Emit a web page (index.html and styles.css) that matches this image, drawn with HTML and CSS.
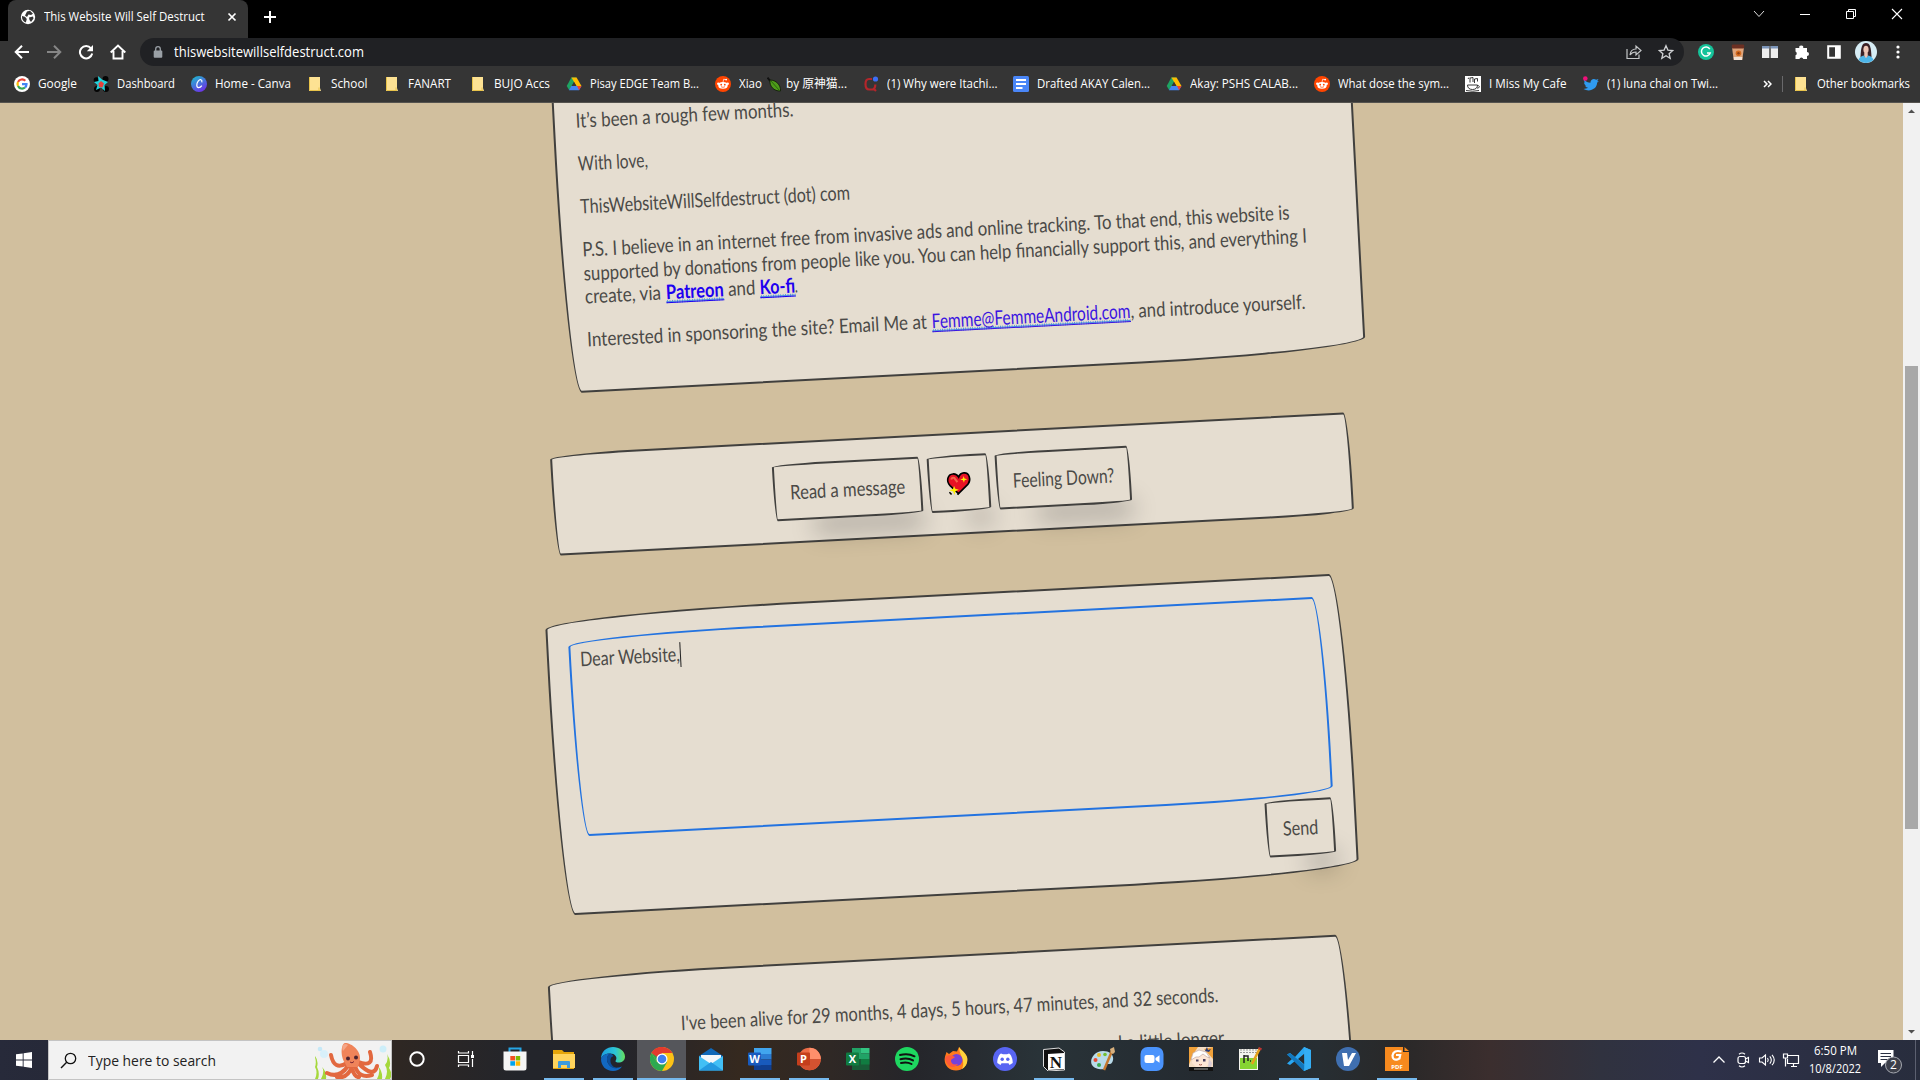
FILE: index.html
```html
<!DOCTYPE html>
<html lang="en">
<head>
<meta charset="utf-8">
<title>This Website Will Self Destruct</title>
<link rel="stylesheet" href="styles.css">
</head>
<body>
<svg class="defs" width="0" height="0" aria-hidden="true">
  <symbol id="folder" viewBox="0 0 16 16"><path d="M2 1h11v11l1 3H2z" fill="#fde293"/><path d="M2.500 1v13.500H13M12 11.500v3" fill="none" stroke="#e8c34a"/></symbol>
  <symbol id="drive" viewBox="0 0 16 16"><path d="M5.400 1.500h5L8 6 3.300 14.300.700 10z" fill="#1ea362"/><path d="M5.400 1.500h5.200L15.500 10h-5z" fill="#fbbc04"/><path d="M5.300 10h10.200L13 14.300H2.900z" fill="#4285f4"/><path d="M12.500 10h3L13 14.300l-2-4.300z" fill="#ea4335"/><path d="M8 6.100l2.300 3.900H5.700z" fill="#353535"/></symbol>
  <symbol id="reddit" viewBox="0 0 16 16"><circle cx="8" cy="8" r="8" fill="#ff4500"/><ellipse cx="8" cy="9.400" rx="4.700" ry="3.300" fill="#fff"/><circle cx="3.300" cy="7.800" r="1.200" fill="#fff"/><circle cx="12.700" cy="7.800" r="1.200" fill="#fff"/><circle cx="6.200" cy="8.700" r=".9" fill="#ff4500"/><circle cx="9.800" cy="8.700" r=".9" fill="#ff4500"/><path d="M6 10.700q2 1.300 4 0" stroke="#ff4500" stroke-width=".7" fill="none"/><path d="M8 6.200l.7-3 2.300.5" stroke="#fff" stroke-width=".7" fill="none"/><circle cx="11.200" cy="3.600" r=".9" fill="#fff"/></symbol>
</svg>

<header class="chrome">
  <div class="tabstrip">
    <div class="tab">
      <svg width="16" height="16" viewBox="0 0 16 16"><circle cx="8" cy="8" r="7.200" fill="#fff"/><path d="M2 7l3 .8L6.800 10l-1 3.500C3 12.500 1.800 10 2 7zM7 2.500l3-.7 3 3L11 6 8.500 5.500 7 8 5 6.500zM9 8.500l4-1 .5 2L11 13l-1.500-2z" fill="#353535"/></svg>
      <span class="tab-title" data-w="160.5">This Website Will Self Destruct</span>
      <svg class="tab-close" width="10" height="10" viewBox="0 0 10 10"><path d="M1.500 1.500l7 7M8.500 1.500l-7 7" stroke="#fff" stroke-width="1.700"/></svg>
    </div>
    <svg class="plus" width="14" height="14" viewBox="0 0 14 14"><path d="M7 1v12M1 7h12" stroke="#fff" stroke-width="2"/></svg>
    <div class="winbtns">
      <svg width="46" height="28" viewBox="0 0 46 28"><path d="M18 11l5 5.500 5-5.500" fill="none" stroke="#ddd"/></svg>
      <svg width="46" height="28" viewBox="0 0 46 28"><path d="M18 14.500h10" stroke="#fff"/></svg>
      <svg width="46" height="28" viewBox="0 0 46 28"><path d="M18.500 11.500h7v7h-7zM20.500 11V9.500h7v7H26" fill="none" stroke="#fff"/></svg>
      <svg width="46" height="28" viewBox="0 0 46 28"><path d="M18 9l10 10M28 9L18 19" stroke="#fff" stroke-width="1.100"/></svg>
    </div>
  </div>

  <div class="toolbar">
    <svg width="16" height="16" viewBox="0 0 16 16"><path d="M15 8H2M8 1.700L1.700 8 8 14.300" fill="none" stroke="#fff" stroke-width="2"/></svg>
    <svg width="16" height="16" viewBox="0 0 16 16"><path d="M1 8h13M8 1.700L14.300 8 8 14.300" fill="none" stroke="#868686" stroke-width="2"/></svg>
    <svg width="16" height="16" viewBox="0 0 16 16"><path d="M13 4.300A6.200 6.200 0 1 0 14.200 9.500" fill="none" stroke="#fff" stroke-width="2"/><path d="M15 1v6.300H8.800z" fill="#fff"/></svg>
    <svg width="16" height="16" viewBox="0 0 16 16"><path d="M.7 8.500L8 1.500l7.300 7M3.500 7v7.500h9V7" fill="none" stroke="#fff" stroke-width="1.900"/></svg>
    <div class="omnibox">
      <svg width="10" height="12" viewBox="0 0 10 12"><rect x=".7" y="4.500" width="8.600" height="7.300" rx="1" fill="#9aa0a6"/><path d="M2.700 5V3a2.300 2.300 0 0 1 4.600 0v2" fill="none" stroke="#9aa0a6" stroke-width="1.300"/></svg>
      <span class="url" data-w="190">thiswebsitewillselfdestruct.com</span>
      <svg class="share" width="16" height="16" viewBox="0 0 16 16"><path d="M1 5v9.500h12V10.500M4 11c.4-4 2.500-6 6-6V2l5 4.500-5 4.500V8C7.500 8 5.500 8.800 4 11z" fill="none" stroke="#c4c6c8" stroke-width="1.200"/></svg>
      <svg width="16" height="16" viewBox="0 0 16 16"><path d="M8 1.700l1.900 4.400 4.800.4-3.600 3.200 1.100 4.600L8 11.800l-4.200 2.500 1.100-4.600L1.300 6.500l4.800-.4z" fill="none" stroke="#d0d2d4" stroke-width="1.300"/></svg>
    </div>
    <svg width="16" height="16" viewBox="0 0 16 16"><circle cx="8" cy="8" r="8" fill="#15c39a"/><path d="M11.800 5.200A4.500 4.500 0 1 0 12.200 9H9" fill="none" stroke="#fff" stroke-width="1.500"/></svg>
    <svg width="16" height="16" viewBox="0 0 16 16"><path d="M2 3h12l-1.700 13H3.700z" fill="#dfa47a"/><path d="M3.700 13h8.600l-.3 3H4z" fill="#f1e3d6"/><rect x="1.800" y=".5" width="12.400" height="4" rx="1" fill="#6b2f22"/><circle cx="8.500" cy="9.300" r="2.800" fill="#d46a1c"/><circle cx="8.500" cy="9.300" r="1.200" fill="#8d3d12"/></svg>
    <svg width="16" height="16" viewBox="0 0 16 16"><path d="M0 2h7.300v12H0zM8.700 2H16v12H8.700z" fill="#eee"/><path d="M0 2h7.300v2.500H0zM8.700 2H16v2.500H8.700z" fill="#7b94b8"/></svg>
    <svg width="16" height="16" viewBox="0 0 16 16"><path d="M1.500 4h3.800a2 2 0 1 1 3.900 0H13v4a2 2 0 1 1 0 4v3H9.300a2 2 0 0 0-3.900 0H1.500v-3.700a2 2 0 0 0 0-3.700z" fill="#fff"/></svg>
    <svg width="16" height="16" viewBox="0 0 16 16"><path d="M2.200 2.200h11.600v11.600H2.200z" fill="none" stroke="#fff" stroke-width="2"/><path d="M9 2h5v12H9z" fill="#fff"/></svg>
    <svg class="avatar" width="22" height="22" viewBox="0 0 22 22"><circle cx="11" cy="11" r="11" fill="#d7edf5"/><path d="M5.500 16C6 6 7 2 11 2s5 4 5.500 14z" fill="#3a2025"/><ellipse cx="11" cy="8.500" rx="2.600" ry="3.800" fill="#edc5b5"/><path d="M3.500 19c1-3 3.500-4 5-4.500l2.500 2 2.500-2c1.500.5 4 1.500 5 4.500a11 11 0 0 1-15 0z" fill="#4db5e8"/><path d="M9.300 11.500h3.400L12.800 15 11 17l-1.800-2z" fill="#edc5b5"/></svg>
    <svg width="16" height="16" viewBox="0 0 16 16"><circle cx="8" cy="3" r="1.600" fill="#fff"/><circle cx="8" cy="8" r="1.600" fill="#fff"/><circle cx="8" cy="13" r="1.600" fill="#fff"/></svg>
  </div>

  <nav class="bookmarks">
    <a class="bm"><svg width="16" height="16" viewBox="0 0 16 16"><circle cx="8" cy="8" r="8" fill="#fff"/><g fill="none" stroke-width="2.200"><path d="M11.300 4.800A4.500 4.500 0 0 0 4 6" stroke="#ea4335"/><path d="M4 6a4.600 4.600 0 0 0 0 4" stroke="#fbbc04"/><path d="M4 10a4.500 4.500 0 0 0 7 1.500" stroke="#34a853"/><path d="M8 8.200h4.500a4.500 4.500 0 0 1-1.500 3.300" stroke="#4285f4"/></g></svg><span data-w="39">Google</span></a>
    <a class="bm"><svg width="16" height="16" viewBox="0 0 16 16"><g fill="#050505"><circle cx="3.500" cy="4" r="2.800"/><circle cx="12.500" cy="3" r="3"/><circle cx="13" cy="13" r="3"/><circle cx="4" cy="13" r="3"/></g><path d="M5 0l4 3.500L15 6l-3.500 3 .5 6-4-3.500-5 2.500 1.500-5L1 6l4.500-1z" fill="#22d3dd"/><path d="M8 5l3 2.500-1.500 4-3.500-.5-.5-3.500z" fill="#e8413c"/></svg><span data-w="58">Dashboard</span></a>
    <a class="bm"><svg width="16" height="16" viewBox="0 0 16 16"><defs><linearGradient id="cv" x1="0" y1="0" x2=".6" y2="1"><stop offset="0" stop-color="#18c3cc"/><stop offset="1" stop-color="#6c35e8"/></linearGradient></defs><circle cx="8" cy="8" r="8" fill="url(#cv)"/><path d="M10.800 6.300c.7-3-1.800-3.500-3.600-1.200-1.900 2.500-2 6.500.4 6.600 1.300 0 2.500-1 3.200-2.100" fill="none" stroke="#fff" stroke-width="1.200"/></svg><span data-w="76">Home - Canva</span></a>
    <a class="bm"><svg width="16" height="16"><use href="#folder"/></svg><span data-w="36.5">School</span></a>
    <a class="bm"><svg width="16" height="16"><use href="#folder"/></svg><span class="wide" data-w="43">FANART</span></a>
    <a class="bm"><svg width="16" height="16"><use href="#folder"/></svg><span data-w="56">BUJO Accs</span></a>
    <a class="bm"><svg width="16" height="16"><use href="#drive"/></svg><span data-w="109">Pisay EDGE Team B...</span></a>
    <a class="bm"><svg width="16" height="16"><use href="#reddit"/></svg><span data-w="23">Xiao</span><svg class="leaf" width="14" height="16" viewBox="0 0 14 16"><path d="M.5 1.500L4 6" stroke="#111" stroke-width="2"/><path d="M3 4c6 0 11 5 10.500 11C7 15.500 2 10 3 4z" fill="#4e9c1a" stroke="#16240c"/><path d="M4 5l8 9" stroke="#2c6410"/></svg><span data-w="61">by 原神猫...</span></a>
    <a class="bm"><svg width="16" height="16" viewBox="0 0 16 16"><path d="M9 3H6C3.500 3 2.500 4.500 2.500 8s1 5.500 3.500 5.500h3c2.500 0 3.300-1.500 3.300-5M10 12l3 3" fill="none" stroke="#b3262b" stroke-width="2.200"/><circle cx="12.500" cy="3" r="2.600" fill="#3d6ef5"/></svg><span data-w="110.5">(1) Why were Itachi...</span></a>
    <a class="bm"><svg width="16" height="16" viewBox="0 0 16 16"><rect width="16" height="16" rx="1.500" fill="#4a86f7"/><path d="M3 4h10M3 8h10M3 12h6.500" stroke="#fff" stroke-width="1.900"/></svg><span data-w="113">Drafted AKAY Calen...</span></a>
    <a class="bm"><svg width="16" height="16"><use href="#drive"/></svg><span data-w="108">Akay: PSHS CALAB...</span></a>
    <a class="bm"><svg width="16" height="16"><use href="#reddit"/></svg><span data-w="111">What dose the sym...</span></a>
    <a class="bm"><svg width="16" height="16" viewBox="0 0 16 16"><path d="M0 0h16v16H0z" fill="#fff"/><path d="M2.500 9h10c0 3-2 4.500-5 4.500s-5-1.500-5-4.500zM12.500 9.500c3 0 2 3-.5 2.500M1 14.500q7 1.500 13 0M5 6.500V2l3-.5V6M9.500 7V3l3-.5v3M3 3l1-1.500" fill="none" stroke="#222" stroke-width=".9"/></svg><span data-w="77.5">I Miss My Cafe</span></a>
    <a class="bm"><svg width="16" height="16" viewBox="0 0 16 16"><path d="M1 3.500c2 2.300 4 3.200 6.500 3.300-.5-3.500 3.500-5 5.600-3L15.500 3l-1.300 2.300 1.600-.3-1.700 1.700C14.200 13 6.500 16.500.5 13c1.800 0 3.300-.4 4.500-1.400-1.500-.2-2.500-1-3-2.200h1.300C1.800 8.900 1 7.700 1 6.200l1.200.3C.9 5.500.6 4.500 1 3.500z" fill="#2f9bf0"/><circle cx="2.300" cy="2.500" r="2.300" fill="#f0107a"/></svg><span data-w="111">(1) luna chai on Twi...</span></a>
    <div class="bm-end">
      <svg width="9" height="8" viewBox="0 0 9 8"><path d="M1 1l3 3-3 3M5 1l3 3-3 3" fill="none" stroke="#fff" stroke-width="1.500"/></svg>
      <i class="bm-rule"></i>
      <a class="bm"><svg width="16" height="16"><use href="#folder"/></svg><span data-w="93">Other bookmarks</span></a>
    </div>
  </nav>
</header>

<div class="viewport">
  <main class="page">
    <section class="card letter">
      <p><span data-w="218">It’s been a rough few months.</span></p>
      <p><span data-w="70">With love,</span></p>
      <p><span data-w="270">ThisWebsiteWillSelfdestruct (dot) com</span></p>
      <p><span data-w="708">P.S. I believe in an internet free from invasive ads and online tracking. To that end, this website is</span><br><span data-w="724">supported by donations from people like you. You can help financially support this, and everything I</span><br><span data-w="80.500">create, via&nbsp;</span><a class="strong" data-w="58">Patreon</a><span data-w="36">&nbsp;and&nbsp;</span><a class="strong" data-w="35.500">Ko-fi</a><span data-w="3">.</span></p>
      <p><span data-w="344.500">Interested in sponsoring the site? Email Me at&nbsp;</span><a data-w="199">Femme@FemmeAndroid.com</a><span data-w="175">, and introduce yourself.</span></p>
    </section>

    <section class="card actions">
      <button class="btn"><span data-w="115">Read a message</span></button>
      <button class="btn"><svg width="28" height="24" viewBox="0 0 28 24"><path d="M13 22L5 13.500C1 9 3 2 8.500 2c2.500 0 4.500 1.500 5.500 3.500C15 3 17 1.500 19.500 1.500c5.500 0 7 7 3.500 11.500z" fill="#e81224" stroke="#000" stroke-width="1.600"/><path d="M6.500 7.500q1-2.500 3-1.500l3 4.500" fill="none" stroke="#f4664a" stroke-width="2"/><path d="M19 4.500l.8 2.700 2.700.8-2.700.8-.8 2.700-.8-2.700-2.700-.8 2.700-.8zM9 14l1 3 3.500 1.200L10 19.500 9 23l-1.300-3.500L4 18.200 7.700 17z" fill="#fff100"/><path d="M4 20l2 2.500M12 23l1.500-2" stroke="#000" stroke-width="1.500"/></svg></button>
      <button class="btn"><span data-w="101.500">Feeling Down?</span></button>
    </section>

    <section class="card compose">
      <div class="field"><span data-w="100">Dear Website,</span><i class="caret"></i></div>
      <button class="btn"><span data-w="35.500">Send</span></button>
    </section>

    <section class="card status">
      <p><span data-w="538">I've been alive for 29 months, 4 days, 5 hours, 47 minutes, and 32 seconds.</span></p>
      <p><span data-w="552">Every letter that you send to me will help me to stay around a little longer.</span></p>
    </section>
  </main>
  <aside class="scrollbar">
    <svg width="17" height="17" viewBox="0 0 17 17"><path d="M5 10l3.500-3.500L12 10z" fill="#505050"/></svg>
    <div class="thumb"></div>
    <svg class="down" width="17" height="17" viewBox="0 0 17 17"><path d="M5 7l3.500 3.500L12 7z" fill="#505050"/></svg>
  </aside>
</div>

<footer class="taskbar">
  <div class="start"><svg width="16" height="16" viewBox="0 0 16 16"><path d="M0 2.300L6.700 1.400V7.600H0zM7.600 1.300L16 0v7.600H7.600zM0 8.400h6.700v6.200L0 13.700zM7.600 8.400H16V16l-8.400-1.300z" fill="#fff"/></svg></div>
  <div class="search">
    <svg width="17" height="17" viewBox="0 0 17 17"><circle cx="10.500" cy="6.500" r="5.200" fill="none" stroke="#111" stroke-width="1.300"/><path d="M6.700 10.200L1 16" stroke="#111" stroke-width="1.400"/></svg>
    <span data-w="128">Type here to search</span>
    <svg class="octopus" width="76" height="38" viewBox="0 0 76 38"><path d="M0 38q3-7 0-12 2-6-1-12 5 5 3 12 3 6 1 12zM6 38q4-8 1-12 5 5 4 12zM62 38q4-8 1-13 5 6 4 13zM70 38q4-8 0-14 4-5 2-11 5 8 2 14 4 6 1 11z" fill="#a5d83c"/><circle cx="9" cy="13" r="4" fill="#d8f0fa"/><circle cx="5" cy="8" r="2.300" fill="#c6e9f8"/><circle cx="68" cy="8" r="3.500" fill="#cdeef9"/><g fill="none" stroke="#e2683f" stroke-width="4" stroke-linecap="round"><path d="M32 22Q19 30 16 14M33 25Q24 38 12 32M37 26Q32 38 22 36M40 25Q44 38 57 34M43 22Q59 38 62 25M43 21Q60 27 55 11M36 26Q40 37 44 36"/></g><path d="M30 22C25 15 26 3 30 2c7 0 16 8 15 16l-2 8H32z" fill="#f0845a"/><path d="M28 10C26 5 29 1 33 4z" fill="#f5a688"/><circle cx="33" cy="17.500" r="2" fill="#4b2330"/><circle cx="41" cy="16.500" r="2" fill="#4b2330"/><path d="M35 21q2 2 4-.5" stroke="#7b2734" fill="none"/></svg>
  </div>
  <div class="apps">
    <div class="app"><svg width="24" height="24" viewBox="0 0 24 24"><circle cx="12" cy="12" r="6.700" fill="none" stroke="#fff" stroke-width="2"/></svg></div>
    <div class="app"><svg width="24" height="24" viewBox="0 0 24 24"><path d="M4.500 8.500h10v7h-10zM4.500 4v2h10V4M4.500 20v-2h10v2M18.500 4v4M18.500 12v8" fill="none" stroke="#fff" stroke-width="1.200"/><path d="M17 8h3v3h-3z" fill="#fff"/></svg></div>
    <div class="app"><svg width="24" height="24" viewBox="0 0 24 24"><path d="M6.500 5V1.500h11V5" fill="none" stroke="#26a5e4" stroke-width="2"/><path d="M.5 4.500h23V21a2.500 2.500 0 0 1-2.500 2.500H3A2.500 2.500 0 0 1 .5 21z" fill="#f5f5f5"/><path d="M7.300 9H12v4.500H7.300z" fill="#f25022"/><path d="M12.700 9h4.500v4.500h-4.500z" fill="#7fba00"/><path d="M7.300 14.200H12v4.500H7.300z" fill="#00a4ef"/><path d="M12.700 14.200h4.500v4.500h-4.500z" fill="#ffb900"/></svg></div>
    <div class="app on"><svg width="24" height="24" viewBox="0 0 24 24"><path d="M1 3h9l2 2h10v17H1z" fill="#e5a50a"/><path d="M1 7h22v14H1z" fill="#ffd45c"/><path d="M6 21v-6a1 1 0 0 1 1-1h10a1 1 0 0 1 1 1v6h-3v-3H9v3z" fill="#3c9bdc"/></svg></div>
    <div class="app on"><svg width="24" height="24" viewBox="0 0 24 24"><defs><linearGradient id="ed"><stop offset="0" stop-color="#1b9de2"/><stop offset=".6" stop-color="#2cc6d6"/><stop offset="1" stop-color="#66e05c"/></linearGradient></defs><path d="M0 12C0 4 6 0 12 0s12 4 12 9.500c0 4-3 6-6.500 6-3 0-3.500-1-2.500-2.500 1.500-3-1-6.500-6-6.500C5 6.500 1.500 8 0 12z" fill="url(#ed)"/><path d="M0 12c1.500-4 5-5.500 9-5.500C6 8.500 5 13 7.500 17s8 5 13.500 2.500C18.500 23 15.500 24 12 24 5 24 0 19 0 12z" fill="#1268c0"/><path d="M9 6.600C5.500 9 5 13 7.500 17c2 3.500 6 5 9 4.500C11 20 9 16 9.500 12.500c.3-2.500 2-3 3-3.500C11.500 7.500 10 7 9 6.600z" fill="#0b4f9c"/></svg></div>
    <div class="app on active"><svg width="24" height="24" viewBox="0 0 24 24"><circle cx="12" cy="12" r="12" fill="#fbc116"/><path d="M1.600 6A12 12 0 0 1 22.400 6H12z" fill="#e33b2e"/><path d="M1.600 6A12 12 0 0 0 12 24l5.200-9L12 12 6.800 15z" fill="#2da94f"/><path d="M1.600 6A12 12 0 0 1 12 0v6.500L7 12z" fill="#e33b2e"/><path d="M1.600 6l5.200 9L7 10z" fill="#2da94f"/><circle cx="12" cy="12" r="5.500" fill="#fff"/><circle cx="12" cy="12" r="4.300" fill="#3f7ef0"/></svg></div>
    <div class="app"><svg width="24" height="24" viewBox="0 0 24 24"><path d="M0 9l12-8 12 8v6H0z" fill="#1068b8"/><path d="M2 8h20v9H2z" fill="#f4f7fa"/><path d="M0 9l12 8 12-8v14.500H0z" fill="#42bff5"/><path d="M0 23.500L12 15l12 8.500z" fill="#2499e0"/></svg></div>
    <div class="app on"><svg width="24" height="24" viewBox="0 0 24 24"><path d="M6 1h17.500v6H6z" fill="#41a5ee"/><path d="M6 7h17.500v5.500H6z" fill="#2b7cd3"/><path d="M6 12.500h17.500V18H6z" fill="#185abd"/><path d="M6 18h17.500v5H6z" fill="#103f91"/><rect y="5.500" width="13" height="13" rx="1" fill="#185abd"/><text x="6.500" y="16" text-anchor="middle" class="ms">W</text></svg></div>
    <div class="app on"><svg width="24" height="24" viewBox="0 0 24 24"><circle cx="12.500" cy="12" r="11.300" fill="#ed6c47"/><path d="M12.500.7A11.300 11.300 0 0 1 23.800 12H12.500z" fill="#ff8f6b"/><path d="M1.200 12h22.600a11.300 11.300 0 0 1-22.600 0z" fill="#d35230"/><rect y="5.500" width="13" height="13" rx="1" fill="#c43e1c"/><text x="6.500" y="16" text-anchor="middle" class="ms">P</text></svg></div>
    <div class="app"><svg width="24" height="24" viewBox="0 0 24 24"><path d="M6 1h9v11H6z" fill="#21a366"/><path d="M15 1h8.500v5.500H15z" fill="#33c481"/><path d="M6 12h9v6H6z" fill="#107c41"/><path d="M15 6.500h8.500V12H15z" fill="#21a366"/><path d="M6 12h17.500v11H6z" fill="#185c37"/><path d="M15 12h8.500v5.500H15z" fill="#107c41"/><rect y="5.500" width="13" height="13" rx="1" fill="#107c41"/><text x="6.500" y="16" text-anchor="middle" class="ms">X</text></svg></div>
    <div class="app"><svg width="24" height="24" viewBox="0 0 24 24"><circle cx="12" cy="12" r="12" fill="#1ed760"/><path d="M5 8q8-2.200 14.500 1.300M5.500 12.200q7-2 12.500 1.200M6 16q6-1.500 10.500 1" fill="none" stroke="#111" stroke-width="2" stroke-linecap="round"/></svg></div>
    <div class="app"><svg width="24" height="24" viewBox="0 0 24 24"><path d="M2.500 5L5 7l4-3 4 .5L15 0c2 3 6 5 8 10 1.500 8-4 13.500-11 13.500S0 18 .7 11.500C1 8.500 2 7 2.500 5z" fill="#ff7a1c"/><path d="M15 0c2 3 6 5 8 10 1.500 6-2 11-5 12C22 13 15 8 15 0z" fill="#ffd23c"/><circle cx="12.500" cy="13" r="6" fill="#7542d9"/><path d="M1 11c2-4 6-3 10-1-1 2-4 1-4 4s3 4 7 3c-4 5-11 4-13-6z" fill="#ff5a3a"/></svg></div>
    <div class="app"><svg width="24" height="24" viewBox="0 0 24 24"><circle cx="12" cy="12" r="12" fill="#5865f2"/><path d="M8 6.500l2 .7h4l2-.7c2 .5 4 6 3.700 9.500L16.500 18l-1-1.700h-7l-1 1.700-3.200-2C4 12.500 6 7 8 6.500z" fill="#fff"/><circle cx="9.200" cy="12.300" r="1.700" fill="#5865f2"/><circle cx="14.800" cy="12.300" r="1.700" fill="#5865f2"/></svg></div>
    <div class="app on"><svg width="24" height="24" viewBox="0 0 24 24"><path d="M1.500 2.500L17 1l5.500 4v18L6 24l-4.500-4.500z" fill="#111" stroke="#ddd"/><path d="M6 7l16-1v16L6 23z" fill="#fff"/><text x="14" y="20.500" text-anchor="middle" class="notion">N</text></svg></div>
    <div class="app"><svg width="24" height="24" viewBox="0 0 24 24"><path d="M12 4c7 0 11 4 10 9s-4 4-6 4-2 2-2 4-10 2-13-3S3 4 12 4z" fill="#b9dbea"/><circle cx="8" cy="8" r="2" fill="#e9bb2c"/><circle cx="4.500" cy="13" r="2" fill="#e84a33"/><circle cx="8" cy="18" r="2" fill="#3bab4e"/><circle cx="14" cy="7.500" r="1.800" fill="#72bf32"/><path d="M13 23L21 4" stroke="#c4772e" stroke-width="2.500"/><path d="M20 6l-1-4 4-2 1 5-2 2z" fill="#d8b07d"/></svg></div>
    <div class="app"><svg width="24" height="24" viewBox="0 0 24 24"><rect x=".5" width="23" height="24" rx="7" fill="#4a93fc"/><rect x="4.500" y="8" width="10" height="8" rx="2" fill="#fff"/><path d="M15.500 11l4-2.700v7.500l-4-2.800z" fill="#fff"/></svg></div>
    <div class="app"><svg width="24" height="24" viewBox="0 0 24 24"><path d="M0 0h24v24H0z" fill="#f3dcc4"/><path d="M0 0h9L3 9l-3 9zM15 2l9-2v12z" fill="#f0a13a"/><path d="M4 9q7-7 15 1l1 7-5 4H8l-5-5z" fill="#fde6d6"/><path d="M2 13L4 6l6-3 7 2 4 6-3-1-4-3-4 3-3 0z" fill="#fff" stroke="#c2a7a2" stroke-width=".7"/><path d="M16 4l2-4 1 3 3-1-2 3z" fill="#273a78"/><path d="M7 12.500h2.500v2H7zM14 12h2.500v2.500H14z" fill="#4a4060"/><path d="M10 17.500q1.500 1 3 0" stroke="#a85a50" fill="none"/><path d="M20 12l3 4-1 4h-3z" fill="#d7c9d4"/><path d="M0 20h24v4H0z" fill="#111"/><path d="M5 22h14" stroke="#ccc" stroke-width=".8"/></svg></div>
    <div class="app"><svg width="24" height="24" viewBox="0 0 24 24"><path d="M1 2h19v21H1z" fill="#f4f4ee"/><path d="M2 11h17v11H2z" fill="#86d432"/><path d="M2 3h17M2 5.500h17" stroke="#999" stroke-dasharray="2 1"/><path d="M6 8v8M6 9h4v5M12 14h1M15 14h1" stroke="#222" stroke-width="1.500" fill="none"/><path d="M14 17L22 1" stroke="#e5a21c" stroke-width="2.600"/><path d="M21 0l3 1.500-1 2-3-1.500z" fill="#b33"/></svg></div>
    <div class="app on"><svg width="24" height="24" viewBox="0 0 24 24"><path d="M17 0l7 3v18l-7 3L8 14l-5 4-3-1.500 5-4.500-5-4.500L3 6l5 4zM17.500 6.500L11 12l6.500 5.500z" fill="#2aa7f2" fill-rule="evenodd"/><path d="M0 7.500L3 6l14.500 12-.5 6z" fill="#1277bd"/><path d="M17 0l7 3v18l-7 3 .5-2z" fill="#34aef5"/></svg></div>
    <div class="app"><svg width="24" height="24" viewBox="0 0 24 24"><circle cx="12" cy="12" r="12" fill="#3f6fb0"/><path d="M6 6h5l1 7 4-7h4l-7 13H8z" fill="#fff"/></svg></div>
    <div class="app on"><svg width="24" height="24" viewBox="0 0 24 24"><path d="M0 0h18v5h6v19H0z" fill="#f78a1e"/><path d="M19.500 0l4.500 4h-4.500z" fill="#f78a1e"/><path d="M16.500 4.500q-8-2-9 4 0 5 5 4l2-1 .7-3.500H11" fill="none" stroke="#fff" stroke-width="2.200"/><text x="12" y="22" text-anchor="middle" class="pdf">PDF</text></svg></div>
  </div>
  <div class="tray">
    <svg width="24" height="20" viewBox="0 0 24 20"><path d="M6.500 12.500L12 7l5.500 5.500" fill="none" stroke="#fff" stroke-width="1.300"/></svg>
    <svg width="24" height="20" viewBox="0 0 24 20"><rect x="7" y="6.500" width="7.500" height="7" rx="2" fill="none" stroke="#fff" stroke-width="1.200"/><path d="M14.500 9l3-1.500v5l-3-1.500M8 4.200q3-2.400 6 0M8 15.800q3 2.400 6 0" fill="none" stroke="#fff" stroke-width="1.100"/></svg>
    <svg width="24" height="20" viewBox="0 0 24 20"><path d="M4.500 8v4H7l3.500 3V5L7 8zM12.500 8q1.500 2 0 4M14.800 6.300q3 3.700 0 7.400M17 4.800q4.500 5.200 0 10.400" fill="none" stroke="#fff" stroke-width="1.100"/></svg>
    <svg width="24" height="20" viewBox="0 0 24 20"><path d="M9 5.500h10.500v8H8.500V9M12 16.500h6M14.500 13.500v3M4.500 4h4v4h-4zM6.500 8v8.500" fill="none" stroke="#fff" stroke-width="1.200"/></svg>
    <div class="clock"><span data-w="43">6:50 PM</span><span data-w="52">10/8/2022</span></div>
    <svg class="notif" width="28" height="28" viewBox="0 0 28 28"><path d="M2 4h15.500v13H9l-4 4v-4H2z" fill="#fff"/><path d="M4.500 7.500h10.500M4.500 10.500h10.500M4.500 13.500h7" stroke="#2a3042"/><circle cx="17.500" cy="19" r="8" fill="#3c3f4a" stroke="#a5a8b0"/><text x="17.500" y="23.300" text-anchor="middle" class="badge">2</text></svg>
  </div>
</footer>
<script src="fit.js"></script>
</body>
</html>
```

FILE: styles.css
```css
* { box-sizing: border-box; }
body {
  margin: 0;
  width: 1920px;
  height: 1080px;
  overflow: hidden;
  display: flex;
  flex-direction: column;
  font: 12px/16px "Open Sans", "Noto Sans CJK SC", sans-serif;
  color: #fff;
}
svg { display: block; flex: none; }
.defs { position: absolute; }
[data-w] { display: inline-block; white-space: nowrap; transform-origin: 0 50%; }

/* browser frame */
.chrome { flex: none; height: 103px; background: #353535; border-bottom: 1px solid #55534f; }
.tabstrip { height: 41px; background: #000; display: flex; padding-left: 8px; }
.tab {
  width: 240px;
  height: 41px;
  padding: 0 11px 7px 12px;
  background: #353535;
  border-radius: 8px 8px 0 0;
  display: flex;
  align-items: center;
}
.tab-title { margin-left: 8px; }
.tab-close { margin-left: auto; }
.plus { margin: 10px 0 0 15px; }
.winbtns { margin-left: auto; display: flex; }
.toolbar { height: 22px; margin-bottom: 13px; display: flex; align-items: center; gap: 16px; padding: 0 14px; }
.omnibox {
  flex: 1;
  height: 28px;
  margin: 0 -2px;
  padding: 0 10px 0 13px;
  border-radius: 14px;
  background: #202124;
  display: flex;
  align-items: center;
}
.omnibox .url { margin-left: 11px; font-size: 14px; }
.omnibox .share { margin: 0 16px 0 auto; }
.avatar { margin: 0 -3px; }
.bookmarks { display: flex; align-items: center; gap: 16px; height: 16px; padding: 0 10px 0 14px; }
.bm { display: flex; align-items: center; gap: 8px; }
.bm .leaf { margin: 0 -3px; }
.bm .wide { border-right: 0; }
.bm:nth-child(5) { padding-right: 3px; }
.bm-end { margin-left: auto; display: flex; align-items: center; gap: 14px; }
.bm-rule { width: 1px; height: 16px; margin: 0 -4px; background: #69696b; }

/* the web page */
.viewport { flex: 1; min-height: 0; display: flex; overflow: hidden; background: #d1bf9e; }
.page {
  flex: 1;
  display: flex;
  flex-direction: column;
  align-items: center;
  gap: 60px;
  margin-top: -282px;
  font: 20px/23.150px "Lato", sans-serif;
  color: #41403e;
}
.card, .btn, .field {
  border: 2px solid #41403e;
  border-radius: 255px 15px 225px 15px / 15px 225px 15px 255px;
}
.card { flex: none; width: 800px; padding: 20px; background: #e5ddd0; transform: rotate(-3deg); }
.card p { margin: 20px 0; }
.card [data-w] { color: #4b4a47; }
.letter { height: 552px; display: flex; flex-direction: column; justify-content: flex-end; padding-left: 21px; }
.letter p { margin: 0 0 20px; }
.letter a[data-w] {
  color: #3a14e0;
  text-decoration: underline;
  text-decoration-thickness: 1px;
  text-underline-offset: 3px;
  background: radial-gradient(circle, #4a8fe0 1px, transparent 1.200px) 0 100% / 3px 3px repeat-x;
}
.letter a.strong { color: #1d00f0; font-weight: 700; }
.actions { height: 102px; display: flex; justify-content: center; gap: 6px; padding-top: 20px; }
.btn {
  height: 57px;
  padding: 0 15px;
  display: flex;
  align-items: center;
  background: transparent;
  color: inherit;
  font: inherit;
  box-shadow: 20px 34px 24px -20px hsla(0, 0%, 0%, .26);
}
.compose { height: 301px; margin-top: -1px; display: flex; flex-direction: column; align-items: flex-end; }
.field { width: 756px; height: 201px; padding: 10px 9px; border-color: #2373e0; display: flex; align-items: flex-start; flex: none; }
.compose .btn { flex: none; }
.caret { width: 1px; height: 25px; background: #222; }
.status { height: 200px; text-align: center; }

.scrollbar { width: 17px; background: #f1f1f1; display: flex; flex-direction: column; align-items: center; }
.thumb { width: 13px; height: 463px; margin-top: 246px; background: #a8a8a8; }
.scrollbar .down { margin-top: auto; }

/* taskbar */
.taskbar {
  flex: none;
  height: 40px;
  display: flex;
  background: linear-gradient(90deg, #272a3a 0, #262938 48px, #2e2723 400px, #23252b 520px, #23242b 620px, #35291f 740px, #2f2825 830px, #25252a 910px, #293338 1040px, #242a30 1200px, #272e33 1320px, #292828 1400px, #3b2e2e 1490px, #30323f 1600px, #2e3149 1700px, #282d3d 1920px);
}
.start { width: 48px; display: flex; align-items: center; justify-content: center; }
.search {
  width: 344px;
  background: #f2f2f2;
  color: #222;
  border: 1px solid #c4c4c4;
  display: flex;
  align-items: center;
  padding-left: 11px;
  font-size: 15px;
}
.search span { margin-left: 11px; }
.search .octopus { margin-left: auto; }
.apps { display: flex; }
.app { width: 49px; height: 40px; display: flex; align-items: center; justify-content: center; border-bottom: 2px solid transparent; }
.on { background: linear-gradient(#76b9ed, #76b9ed) 50% 100% / 40px 2px no-repeat border-box; }
.active { background-color: #55565b; background-size: 49px 2px; }
.ms { font: bold 11px "Open Sans", sans-serif; fill: #fff; }
.notion { font: bold 17px "Liberation Serif", serif; fill: #111; }
.pdf { font: bold 6px "Open Sans", sans-serif; fill: #fff; }
.badge { font: 12px "Open Sans", sans-serif; fill: #fff; }
.tray { margin: 0 4px 0 auto; display: flex; align-items: center; border-right: 1px solid #5c6070; }
.clock { width: 64px; margin-right: 9px; display: flex; flex-direction: column; align-items: center; line-height: 18px; }
.tray .notif { margin-right: 11px; }
```

FILE: fit.js
```js
document.querySelectorAll('[data-w]').forEach(function (el) {
  var natural = parseFloat(getComputedStyle(el).width);
  var target = parseFloat(el.dataset.w);
  el.style.transform = 'scaleX(' + target / natural + ')';
  el.style.marginRight = (target - natural) + 'px';
});
```
